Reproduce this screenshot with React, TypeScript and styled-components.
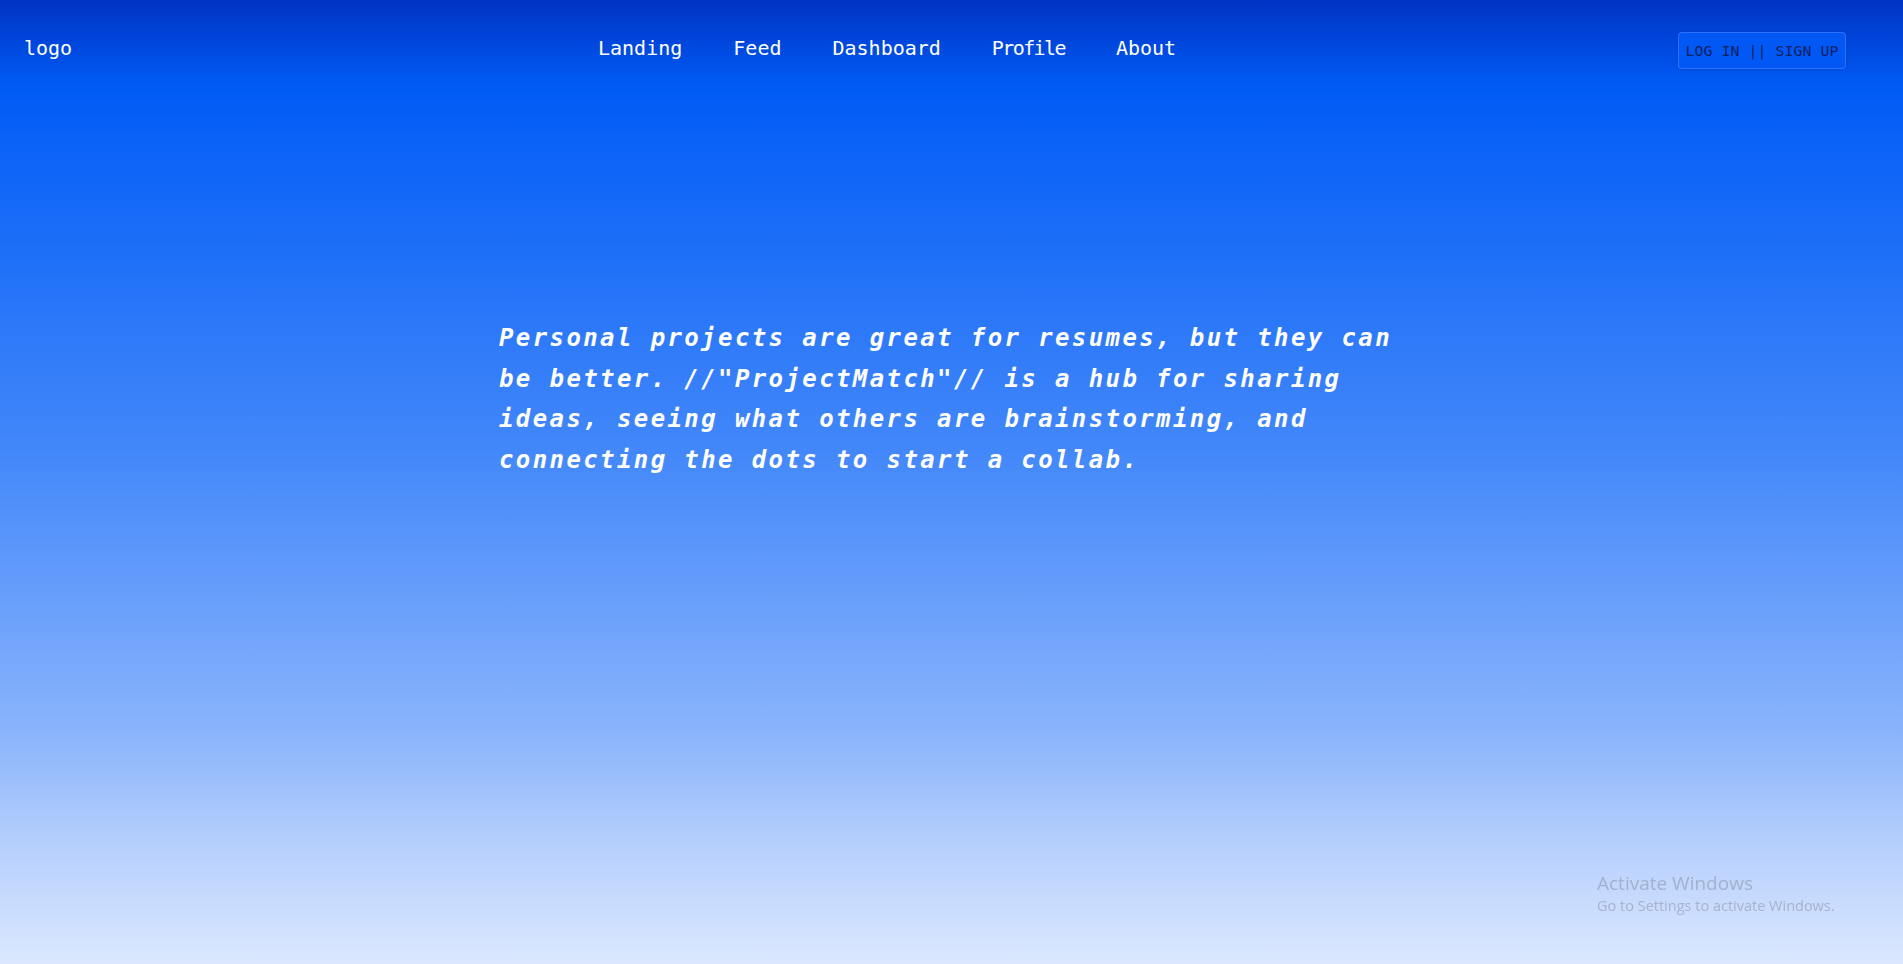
import React from "react";
import styled, { createGlobalStyle } from "styled-components";

const GlobalStyle = createGlobalStyle`
  html, body {
    margin: 0;
    padding: 0;
  }
  body {
    min-height: 100vh;
    background: linear-gradient(
      to bottom,
      #0033c4 0%,
      #005bf6 9%,
      #1c6ef8 25%,
      #4589fa 48%,
      #8ab4fc 76%,
      #b7d0fd 88%,
      #dbe8fe 100%
    );
    background-attachment: fixed;
    font-family: "DejaVu Sans Mono", monospace;
  }
`;

const Page = styled.div`
  min-height: 964px;
  display: flex;
  flex-direction: column;
`;

const Header = styled.header`
  display: grid;
  grid-template-columns: 574px auto 1fr;
  align-items: center;
  height: 96px;
  padding: 0 57px 0 24px;
  box-sizing: border-box;
`;

const Logo = styled.div`
  font-family: "DejaVu Sans Mono", monospace;
  font-size: 20px;
  color: #ffffff;
  line-height: 1;
`;

const Nav = styled.nav`
  display: flex;
  gap: 51px;
  align-items: center;
`;

const NavLink = styled.a<{ $tracking?: number }>`
  font-family: "DejaVu Sans Mono", monospace;
  font-size: 20px;
  letter-spacing: ${(p) => p.$tracking ?? 0}px;
  color: #ffffff;
  text-decoration: none;
  cursor: pointer;
`;

const AuthButton = styled.button`
  justify-self: end;
  margin-top: 5px;
  height: 37px;
  width: 168px;
  padding: 0;
  border: 1px solid rgba(50, 115, 255, 0.9);
  border-radius: 4px;
  background: #0258f5;
  box-shadow: 0 0 3px rgba(0, 30, 120, 0.25);
  color: #0d2260;
  font-family: "DejaVu Sans Mono", monospace;
  font-size: 14.8px;
  letter-spacing: 0.1px;
  cursor: pointer;
`;

const Hero = styled.main`
  display: flex;
  justify-content: center;
  padding-top: 222px;
`;

const Tagline = styled.p`
  width: 905px;
  margin: 0;
  font-family: "DejaVu Sans Mono", monospace;
  font-style: italic;
  font-weight: bold;
  font-size: 24px;
  letter-spacing: 2.4px;
  line-height: 40.5px;
  color: #ffffff;
`;

const Watermark = styled.div`
  position: fixed;
  left: 1597px;
  top: 870px;
  font-family: "Open Sans", "Noto Sans", sans-serif;
  color: rgba(130, 140, 160, 0.5);
  pointer-events: none;
`;

const WatermarkTitle = styled.div`
  font-size: 19px;
  line-height: 26px;
`;

const WatermarkSub = styled.div`
  font-size: 14.5px;
  line-height: 20px;
`;

const links: { label: string; tracking?: number }[] = [
  { label: "Landing" },
  { label: "Feed" },
  { label: "Dashboard" },
  { label: "Profile", tracking: -1.6 },
  { label: "About" },
];

export default function App() {
  return (
    <>
      <GlobalStyle />
      <Page>
        <Header>
          <Logo>logo</Logo>
          <Nav>
            {links.map((l) => (
              <NavLink key={l.label} $tracking={l.tracking}>
                {l.label}
              </NavLink>
            ))}
          </Nav>
          <AuthButton>LOG IN || SIGN UP</AuthButton>
        </Header>
        <Hero>
          <Tagline>
            Personal projects are great for resumes, but they can be better.
            //"ProjectMatch"// is a hub for sharing ideas, seeing what others
            are brainstorming, and connecting the dots to start a collab.
          </Tagline>
        </Hero>
      </Page>
      <Watermark>
        <WatermarkTitle>Activate Windows</WatermarkTitle>
        <WatermarkSub>Go to Settings to activate Windows.</WatermarkSub>
      </Watermark>
    </>
  );
}
